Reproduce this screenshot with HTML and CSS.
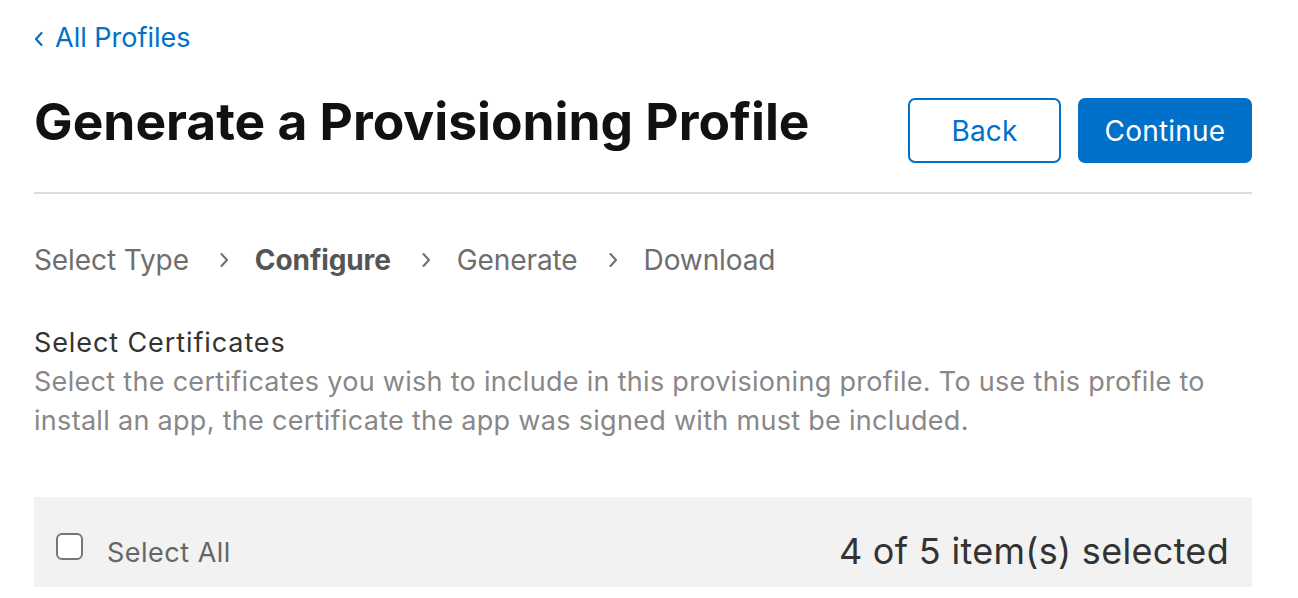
FILE: index.html
```html
<!DOCTYPE html>
<html>
<head>
<meta charset="utf-8">
<link rel="stylesheet" href="styles.css">
</head>
<body>
<div class="page">
  <a class="back-link" href="#"><svg class="back-chev" width="10" height="16" viewBox="0 0 10 16"><polyline points="7.5,2 2,8 7.5,14" fill="none" stroke="#0070c9" stroke-width="2.2" stroke-linecap="round" stroke-linejoin="round"/></svg>All Profiles</a>
  <div class="header">
    <h1 class="title">Generate a Provisioning Profile</h1>
    <div class="actions">
      <button class="btn btn-outline">Back</button>
      <button class="btn btn-primary">Continue</button>
    </div>
  </div>
  <div class="steps">
    <span class="step">Select Type</span>
    <svg class="sep" width="10" height="16" viewBox="0 0 10 16"><polyline points="2.5,2 8,8 2.5,14" fill="none" stroke="#6e6e6e" stroke-width="2" stroke-linecap="round" stroke-linejoin="round"/></svg>
    <span class="step current">Configure</span>
    <svg class="sep" width="10" height="16" viewBox="0 0 10 16"><polyline points="2.5,2 8,8 2.5,14" fill="none" stroke="#6e6e6e" stroke-width="2" stroke-linecap="round" stroke-linejoin="round"/></svg>
    <span class="step">Generate</span>
    <svg class="sep" width="10" height="16" viewBox="0 0 10 16"><polyline points="2.5,2 8,8 2.5,14" fill="none" stroke="#6e6e6e" stroke-width="2" stroke-linecap="round" stroke-linejoin="round"/></svg>
    <span class="step">Download</span>
  </div>
  <div class="section">
    <div class="section-title">Select Certificates</div>
    <p class="section-desc">Select the certificates you wish to include in this provisioning profile. To use this profile to install an app, the certificate the app was signed with must be included.</p>
  </div>
  <div class="table-head">
    <label class="select-all"><span class="checkbox"></span>Select All</label>
    <span class="count">4 of 5 item(s) selected</span>
  </div>
</div>
</body>
</html>
```

FILE: styles.css
```css
html, body {
  margin: 0;
  padding: 0;
  background: #fff;
}
body {
  font-family: Inter, "Noto Sans", Roboto, sans-serif;
  color: #1d1d1f;
  overflow: hidden;
}
.page {
  padding: 20px 46px 0 34px;
}
.back-link {
  display: inline-flex;
  align-items: center;
  color: #0070c9;
  text-decoration: none;
  font-size: 27px;
  line-height: 36px;
}
.back-chev {
  margin: 2px 11px 0 0;
}
.header {
  display: flex;
  justify-content: space-between;
  align-items: flex-start;
  margin-top: 42px;
  padding-bottom: 29px;
  border-bottom: 2px solid #dcdcdc;
}
.title {
  margin: 0;
  font-size: 51.5px;
  line-height: 46px;
  font-weight: 700;
  color: #111;
}
.actions {
  display: flex;
  gap: 17px;
}
.btn {
  font-family: inherit;
  font-size: 28px;
  letter-spacing: 0.2px;
  height: 65px;
  border-radius: 7px;
  cursor: pointer;
  padding: 0;
}
.btn-outline {
  width: 153px;
  background: #fff;
  color: #0070c9;
  border: 2px solid #0070c9;
}
.btn-primary {
  width: 174px;
  background: #0070c9;
  color: #fff;
  border: 2px solid #0070c9;
}
.steps {
  display: flex;
  align-items: center;
  margin-top: 48px;
  font-size: 28px;
  line-height: 36px;
  letter-spacing: -0.1px;
  color: #6e6e6e;
}
.step.current {
  font-weight: 700;
  color: #555;
}
.sep {
  margin: 0 26px 0 30px;
  flex: none;
}
.section {
  margin-top: 46px;
}
.section-title {
  font-size: 27px;
  line-height: 38px;
  letter-spacing: 0.9px;
  color: #333;
}
.section-desc {
  margin: 0;
  font-size: 27px;
  line-height: 39px;
  letter-spacing: 0.3px;
  color: #888;
}
.table-head {
  margin-top: 57px;
  height: 90px;
  background: #f2f2f2;
  display: flex;
  align-items: flex-start;
  justify-content: space-between;
  padding: 38px 23px 0 22px;
  box-sizing: border-box;
}
.select-all {
  display: flex;
  align-items: flex-start;
  font-size: 27px;
  line-height: 36px;
  letter-spacing: 0.5px;
  color: #666;
}
.checkbox {
  width: 27px;
  height: 27px;
  border: 2px solid #777;
  border-radius: 6px;
  margin: -2px 24px 0 0;
  box-sizing: border-box;
  background: #fff;
  flex: none;
}
.count {
  font-size: 36px;
  line-height: 44px;
  letter-spacing: 0.3px;
  color: #333;
  margin-top: -6px;
}
```
